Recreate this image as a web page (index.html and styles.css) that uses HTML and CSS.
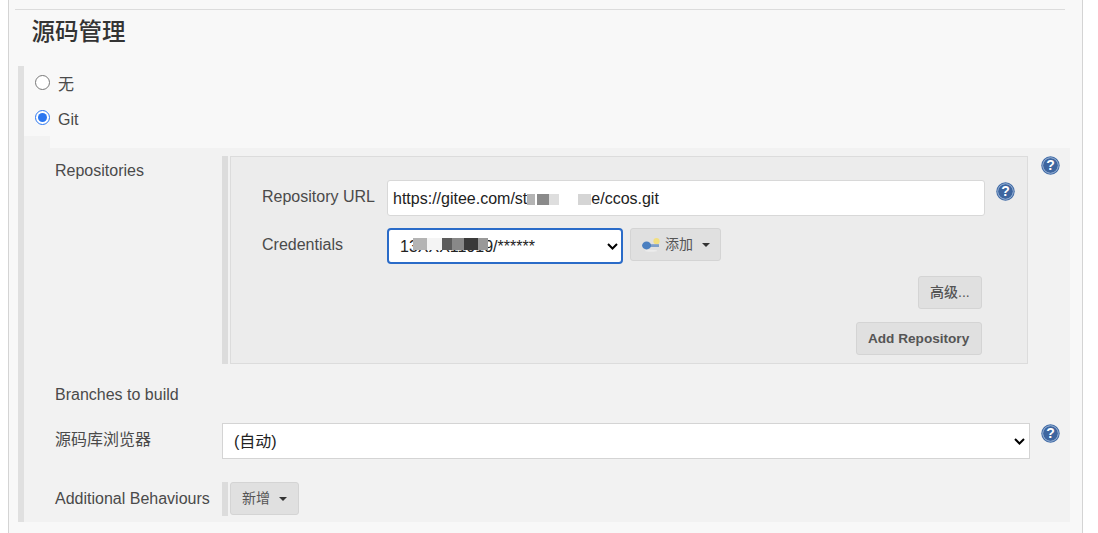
FILE: index.html
```html
<!DOCTYPE html>
<html lang="zh-CN">
<head>
    <meta charset="UTF-8">
    <meta name="viewport" content="width=device-width, initial-scale=1.0">
    <title>源码管理</title>
    <link rel="stylesheet" href="styles.css">
</head>
<body>
    <svg class="icon-defs" aria-hidden="true">
        <symbol id="help" viewBox="0 0 19 19">
            <circle cx="9.5" cy="9.5" r="9.2" fill="#3f6aa6"/>
            <circle cx="9.5" cy="9.5" r="7.7" fill="none" stroke="#a9bedb" stroke-width="1"/>
            <circle cx="9.5" cy="9.5" r="7" fill="#3d659f"/>
            <text x="9.5" y="14.4" text-anchor="middle" font-size="14" font-weight="700" font-family="Liberation Sans, sans-serif" fill="#fff">?</text>
        </symbol>
    </svg>

    <div class="panel">
        <div class="top-line"></div>
        <h2 class="section-title">源码管理</h2>

        <div class="scm-block">
            <label class="radio-row"><input type="radio" name="scm"> <span class="radio-none">无</span></label>
            <label class="radio-row"><input type="radio" name="scm" checked> <span class="radio-git">Git</span></label>
            <div class="notch"></div>

            <div class="git-details">
                <div class="row row-repos">
                    <div class="row-label">Repositories</div>
                    <div class="repos">
                        <div class="grip"></div>
                        <div class="repo-box">
                            <div class="repo-field">
                                <div class="field-label">Repository URL</div>
                                <div class="url-input">https://gitee.com/st<span class="mask mask-url"></span>e/ccos.git</div>
                                <svg class="help help-inner"><use href="#help"/></svg>
                            </div>
                            <div class="repo-field">
                                <div class="field-label">Credentials</div>
                                <div class="cred-wrap">
                                    <select class="cred-select">
                                        <option>13XXX11919/******</option>
                                    </select>
                                    <span class="mask mask-cred"></span>
                                </div>
                                <button class="btn btn-add" type="button">
                                    <svg class="key" width="18" height="14" viewBox="0 0 18 14">
                                        <circle cx="14.5" cy="3.2" r="3.1" fill="#f2df80"/>
                                        <rect x="6" y="6.2" width="11" height="2.8" fill="#7f9fc8"/>
                                        <ellipse cx="4.6" cy="7.5" rx="4.5" ry="3.9" fill="#4a7fc0"/>
                                        <ellipse cx="9" cy="12.8" rx="6" ry="1" fill="#ececec"/>
                                    </svg>
                                    <span class="btn-text">添加</span><span class="caret"></span>
                                </button>
                            </div>
                            <div class="repo-actions">
                                <button class="btn btn-adv" type="button"><span class="btn-text">高级...</span></button>
                                <button class="btn btn-repo" type="button">Add Repository</button>
                            </div>
                        </div>
                    </div>
                    <svg class="help"><use href="#help"/></svg>
                </div>

                <div class="row row-branches">
                    <div class="row-label">Branches to build</div>
                </div>

                <div class="row row-browser">
                    <div class="row-label">源码库浏览器</div>
                    <select class="browser-select">
                        <option>(自动)</option>
                    </select>
                    <svg class="help help-browser"><use href="#help"/></svg>
                </div>

                <div class="row row-extra">
                    <div class="row-label">Additional Behaviours</div>
                    <div class="repos">
                        <div class="grip"></div>
                        <button class="btn btn-new" type="button"><span class="btn-text">新增</span><span class="caret"></span></button>
                    </div>
                </div>
            </div>
        </div>
    </div>
</body>
</html>
```

FILE: styles.css
```css
/* General */
html, body {
    height: 100%;
}
body {
    margin: 0;
    background-color: #fff;
    font-family: "Liberation Sans", "Noto Sans CJK SC", sans-serif;
    font-size: 16px;
    color: #4a4a4a;
    overflow: hidden;
}
.icon-defs {
    display: none;
}
.panel {
    box-sizing: border-box;
    width: 1075px;
    height: 100%;
    margin-left: 8px;
    padding-top: 9px;
    background-color: #f8f8f8;
    border-left: 1px solid #d4d4d4;
    border-right: 1px solid #d4d4d4;
}
.top-line {
    height: 1px;
    margin: 0 17px 0 6px;
    background-color: #dcdcdc;
}
.section-title {
    height: 56px;
    margin: 0;
    padding: 6px 0 0 22.5px;
    box-sizing: border-box;
    font-size: 23.5px;
    line-height: 32px;
    font-weight: 500;
    color: #333;
}

/* SCM block */
.scm-block {
    width: 1046px;
    margin-left: 9px;
    border-left: 6px solid #e0e0e0;
}
.radio-row {
    display: flex;
    align-items: center;
    gap: 8px;
    height: 35px;
    padding-left: 11px;
}
.radio-row input {
    width: 15px;
    height: 15px;
    margin: 0;
    position: relative;
    top: -1px;
    accent-color: #2a76f0;
}
.radio-none {
    margin-bottom: 2px;
}
.radio-git {
    margin-top: 2px;
}
.notch {
    width: 26px;
    height: 12px;
    background-color: #f2f2f2;
}
.git-details {
    padding: 8px 0 6px 31px;
    background-color: #f2f2f2;
}

/* Rows */
.row {
    display: flex;
    align-items: flex-start;
}
.row-label {
    flex: 0 0 167px;
    line-height: 30px;
}
.repos {
    display: flex;
    gap: 2px;
}
.grip {
    width: 6px;
    background-color: #dcdcdc;
}
.repo-box {
    box-sizing: border-box;
    width: 798px;
    height: 208px;
    padding: 23px 0 0 31px;
    background-color: #ececec;
    border: 1px solid #dcdcdc;
}
.help {
    flex: none;
    width: 19px;
    height: 19px;
    margin-left: 13px;
}
.row-branches {
    margin-top: 16px;
}
.row-browser {
    margin-top: 13px;
}
.row-browser .row-label {
    padding-top: 2px;
}
.help-browser {
    margin: 1px 0 0 11px;
}
.row-extra {
    margin-top: 23px;
}
.row-extra .row-label {
    padding-top: 2px;
}
.row-extra .repos {
    height: 34px;
}

/* Repository fields */
.repo-field {
    display: flex;
    align-items: flex-start;
    margin-bottom: 12px;
}
.field-label {
    flex: 0 0 125px;
    line-height: 34px;
}
.url-input {
    box-sizing: border-box;
    width: 598px;
    height: 36px;
    padding-left: 5px;
    line-height: 36px;
    color: #222;
    background-color: #fff;
    border: 1px solid #d8d8d8;
    border-radius: 3px;
    white-space: nowrap;
}
.help-inner {
    margin: 2px 0 0 11px;
}
.mask {
    display: inline-block;
    height: 11px;
    background: linear-gradient(90deg, #b4b4b4 0 12%, #fff 12% 15%, #8a8a8a 15% 35%, #dedede 35% 50%, #fff 50% 80%, #d5d5d5 80% 100%);
}
.mask-url {
    width: 64px;
    vertical-align: -1px;
}
.cred-wrap {
    position: relative;
}
.cred-select {
    box-sizing: border-box;
    display: block;
    width: 236px;
    height: 36px;
    padding-left: 11px;
    font: inherit;
    color: #222;
    appearance: none;
    background: #fff url("data:image/svg+xml,%3Csvg xmlns='http://www.w3.org/2000/svg' width='11' height='7'%3E%3Cpath d='M1 1l4.5 4.5L10 1' fill='none' stroke='%23000' stroke-width='2'/%3E%3C/svg%3E") no-repeat right 3px center;
    border: 2px solid #2a6bc8;
    border-radius: 4px;
}
.mask-cred {
    position: absolute;
    left: 26px;
    top: 10px;
    width: 75px;
    height: 12px;
    background: linear-gradient(90deg, #b4b4b4 0 18%, #f4f4f4 18% 38%, #5c5c5c 38% 52%, #888 52% 68%, #3a3a3a 68% 86%, #999 86% 100%);
}
.browser-select {
    box-sizing: border-box;
    flex: 0 0 808px;
    height: 36px;
    padding-left: 11px;
    font: inherit;
    color: #222;
    appearance: none;
    background: #fff url("data:image/svg+xml,%3Csvg xmlns='http://www.w3.org/2000/svg' width='11' height='7'%3E%3Cpath d='M1 1l4.5 4.5L10 1' fill='none' stroke='%23000' stroke-width='2'/%3E%3C/svg%3E") no-repeat right 4px center;
    border: 1px solid #d4d4d4;
}

/* Buttons */
.btn {
    box-sizing: border-box;
    display: inline-flex;
    align-items: center;
    flex: none;
    height: 33px;
    padding: 0 11px;
    font-family: inherit;
    font-size: 14px;
    color: #555;
    white-space: nowrap;
    background-color: #e0e0e0;
    border: 1px solid #d4d4d4;
    border-radius: 3px;
}
.btn-text {
    margin-bottom: 3px;
}
.btn-add {
    width: 91px;
    margin-left: 7px;
}
.key {
    flex: none;
    margin-right: 5px;
}
.caret {
    width: 0;
    height: 0;
    margin-left: 9px;
    border-left: 4px solid transparent;
    border-right: 4px solid transparent;
    border-top: 4px solid #333;
}
.repo-actions {
    display: flex;
    flex-direction: column;
    align-items: flex-end;
    gap: 13px;
    padding-right: 45px;
}
.btn-adv {
    width: 64px;
    font-weight: 500;
}
.btn-repo {
    width: 126px;
    font-size: 13.6px;
    font-weight: 700;
}
.btn-new {
    width: 69px;
}
```
